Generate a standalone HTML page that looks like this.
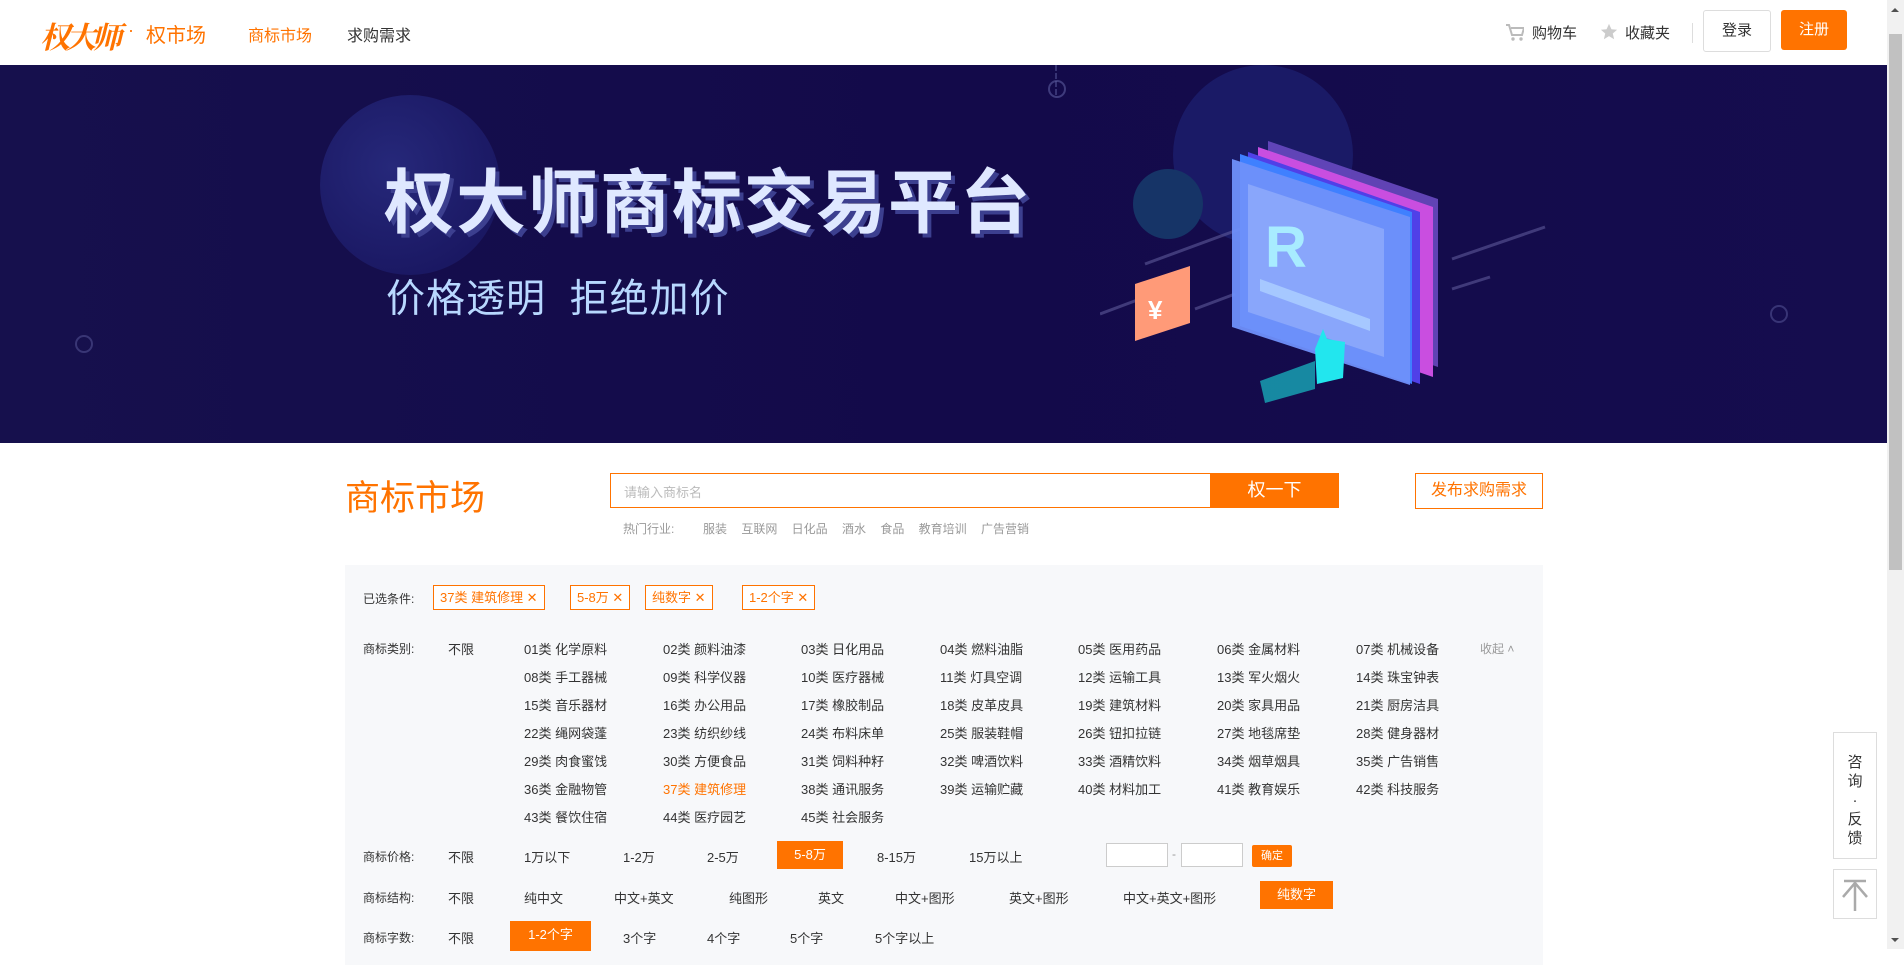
<!DOCTYPE html>
<html><head><meta charset="utf-8"><style>
*{margin:0;padding:0;box-sizing:border-box}
body{width:1904px;height:949px;overflow:hidden;font-family:"Liberation Sans","Noto Sans CJK SC",sans-serif;background:#fff;position:relative;color:#333}
.a{position:absolute;white-space:nowrap}
.o{color:#ff7300}
.hdr{position:absolute;left:0;top:0;width:1887px;height:65px;background:#fff}
.banner{position:absolute;left:0;top:65px;width:1887px;height:378px;background:linear-gradient(90deg,#16104d,#130a4a 50%,#150d4e);overflow:hidden}
.panel{position:absolute;left:345px;top:565px;width:1198px;height:400px;background:#f7f8fa}
.r{font-size:13px;color:#333}
.lb{font-size:12px;color:#333}
.tag{position:absolute;top:585px;height:25px;border:1px solid #ff7300;color:#ff7300;font-size:13px;line-height:23px;padding:0 6px;background:#fff}
.sel{position:absolute;background:#ff7300;color:#fff;font-size:13px;text-align:center}
</style></head><body>
<div class="hdr">
<div class="a" style="left:40px;top:13px;font-size:30px;font-style:italic;font-weight:bold;color:#ff7300;font-family:'Noto Serif CJK SC',serif;letter-spacing:-4px">权大师</div>
<div class="a o" style="left:128px;top:20px;font-size:18px">·</div>
<div class="a o" style="left:146px;top:19px;font-size:20px">权市场</div>
<div class="a o" style="left:248px;top:22px;font-size:16px">商标市场</div>
<div class="a" style="left:347px;top:22px;font-size:16px">求购需求</div>
<svg class="a" style="left:1506px;top:24px" width="18" height="17" viewBox="0 0 18 17"><path d="M0 1h3l3 10h10l2-7H5" fill="none" stroke="#bbb" stroke-width="2"/><circle cx="7" cy="15" r="1.7" fill="#bbb"/><circle cx="15" cy="15" r="1.7" fill="#bbb"/></svg>
<div class="a" style="left:1532px;top:22px;font-size:15px">购物车</div>
<svg class="a" style="left:1600px;top:23px" width="18" height="18" viewBox="0 0 20 20"><path d="M10 1l2.7 6 6.3.5-4.8 4.2 1.5 6.3L10 14.6 4.3 18l1.5-6.3L1 7.5 7.3 7z" fill="#ccc"/></svg>
<div class="a" style="left:1625px;top:22px;font-size:15px">收藏夹</div>
<div class="a" style="left:1692px;top:23px;width:1px;height:20px;background:#ddd"></div>
<div class="a" style="left:1703px;top:10px;width:68px;height:42px;border:1px solid #ddd;border-radius:3px;font-size:15px;line-height:40px;text-align:center">登录</div>
<div class="a" style="left:1781px;top:10px;width:66px;height:40px;background:#ff7300;border-radius:3px;color:#fff;font-size:15px;line-height:40px;text-align:center">注册</div>
</div>
<div class="banner">
<div class="a" style="left:320px;top:30px;width:180px;height:180px;border-radius:50%;background:radial-gradient(circle at 40% 40%,#26287a,#16125a)"></div>
<div class="a" style="left:1173px;top:0px;width:180px;height:180px;border-radius:50%;background:#1a1a66"></div>
<div class="a" style="left:1133px;top:104px;width:70px;height:70px;border-radius:50%;background:#163467"></div>
<div class="a" style="left:384px;top:82px;font-size:70px;font-weight:bold;color:#dfe8ff;letter-spacing:2px;text-shadow:4px 4px 0 #3c3f8f">权大师商标交易平台</div>
<div class="a" style="left:386px;top:203px;font-size:39px;color:#b8d8ff;letter-spacing:1px">价格透明&nbsp;&nbsp;拒绝加价</div>
<svg class="a" style="left:1100px;top:0" width="500" height="378" viewBox="0 0 500 330">
<line x1="45" y1="175" x2="140" y2="140" stroke="#5e5a9a" stroke-width="3" opacity=".6"/>
<line x1="0" y1="225" x2="40" y2="210" stroke="#5e5a9a" stroke-width="3" opacity=".6"/>
<line x1="95" y1="220" x2="135" y2="205" stroke="#5e5a9a" stroke-width="3" opacity=".6"/>
<line x1="352" y1="170" x2="445" y2="138" stroke="#5e5a9a" stroke-width="3" opacity=".6"/>
<line x1="352" y1="200" x2="390" y2="188" stroke="#5e5a9a" stroke-width="3" opacity=".6"/>
<path d="M168 52l170 58v168l-170-58z" fill="#6849c0" opacity=".9"/>
<path d="M158 58l175 60v170l-175-60z" fill="#c94ee0"/>
<path d="M148 63l172 60v172l-172-60z" fill="#5040e8"/>
<path d="M140 65l172 58v172l-172-58z" fill="#3f80ff"/>
<path d="M132 70l178 58v168l-178-58z" fill="#6f90fa" opacity=".95"/>
<path d="M148 95l136 45v128l-136-45z" fill="#89a6fb"/>
<text x="165" y="178" font-family="Liberation Sans" font-weight="bold" font-size="58" fill="#a8ecff">R</text>
<path d="M160 190l110 40v12l-110-40z" fill="#a6c8ff"/>
<path d="M215 260l8-20 4 10 18 3-2 36-26 6z" fill="#22e6ee"/>
<path d="M160 292l55-20v28l-50 14z" fill="#18a9b8" opacity=".8"/>
<path d="M35 195l55-18v57l-55 18z" fill="#ff9a78"/>
<text x="48" y="230" font-family="Liberation Sans" font-weight="bold" font-size="26" fill="#fff">¥</text>
</svg>
<div class="a" style="left:1055px;top:0;width:2px;height:30px;border-left:2px dashed #5b5c9e;opacity:.5"></div>
<div class="a" style="left:1048px;top:0;width:18px;height:18px;border:2px solid #5b5c9e;border-radius:50%;top:15px;opacity:.6"></div>
<div class="a" style="left:1770px;top:240px;width:18px;height:18px;border:2px solid #5b5c9e;border-radius:50%;opacity:.5"></div>
<div class="a" style="left:75px;top:270px;width:18px;height:18px;border:2px solid #5b5c9e;border-radius:50%;opacity:.5"></div>
</div>
<div class="a o" style="left:345px;top:470px;font-size:35px">商标市场</div>
<div class="a" style="left:610px;top:473px;width:600px;height:35px;border:1px solid #ff7300;border-right:0;background:#fff"></div>
<div class="a" style="left:624px;top:482px;font-size:13px;color:#bbb">请输入商标名</div>
<div class="a" style="left:1210px;top:473px;width:129px;height:35px;background:#ff7300;color:#fff;font-size:18px;line-height:35px;text-align:center">权一下</div>
<div class="a o" style="left:1415px;top:473px;width:128px;height:36px;border:1px solid #ff7300;font-size:16px;line-height:34px;text-align:center">发布求购需求</div>
<div class="a" style="left:623px;top:520px;font-size:12px;color:#999;word-spacing:11px">热门行业:&nbsp; 服装 互联网 日化品 酒水 食品 教育培训 广告营销</div>
<div class="panel"></div>
<div class="a lb" style="left:363px;top:590px">已选条件:</div>
<div class="tag" style="left:433px">37类 建筑修理 ✕</div>
<div class="tag" style="left:570px">5-8万 ✕</div>
<div class="tag" style="left:645px">纯数字 ✕</div>
<div class="tag" style="left:742px">1-2个字 ✕</div>
<div class="a lb" style="left:363px;top:640px">商标类别:</div>
<div class="a r" style="left:448px;top:639px">不限</div>
<div class="a" style="left:1480px;top:640px;font-size:12px;color:#999">收起 ˄</div>
<div id="cls"></div>
<div class="a lb" style="left:363px;top:848px">商标价格:</div>
<div class="a r" style="left:448px;top:847px">不限</div>
<div class="a r" style="left:524px;top:847px">1万以下</div>
<div class="a r" style="left:623px;top:847px">1-2万</div>
<div class="a r" style="left:707px;top:847px">2-5万</div>
<div class="sel" style="left:777px;top:841px;width:66px;height:28px;line-height:28px">5-8万</div>
<div class="a r" style="left:877px;top:847px">8-15万</div>
<div class="a r" style="left:969px;top:847px">15万以上</div>
<div class="a" style="left:1106px;top:843px;width:62px;height:24px;border:1px solid #ccc;background:#fff"></div>
<div class="a" style="left:1172px;top:847px;font-size:12px;color:#999">-</div>
<div class="a" style="left:1181px;top:843px;width:62px;height:24px;border:1px solid #ccc;background:#fff"></div>
<div class="sel" style="left:1252px;top:845px;width:40px;height:22px;line-height:22px;font-size:11px;border-radius:2px">确定</div>
<div class="a lb" style="left:363px;top:889px">商标结构:</div>
<div class="a r" style="left:448px;top:888px">不限</div>
<div class="a r" style="left:524px;top:888px">纯中文</div>
<div class="a r" style="left:614px;top:888px">中文+英文</div>
<div class="a r" style="left:729px;top:888px">纯图形</div>
<div class="a r" style="left:818px;top:888px">英文</div>
<div class="a r" style="left:895px;top:888px">中文+图形</div>
<div class="a r" style="left:1009px;top:888px">英文+图形</div>
<div class="a r" style="left:1123px;top:888px">中文+英文+图形</div>
<div class="sel" style="left:1260px;top:881px;width:73px;height:28px;line-height:28px">纯数字</div>
<div class="a lb" style="left:363px;top:929px">商标字数:</div>
<div class="a r" style="left:448px;top:928px">不限</div>
<div class="sel" style="left:510px;top:921px;width:81px;height:30px;line-height:28px">1-2个字</div>
<div class="a r" style="left:623px;top:928px">3个字</div>
<div class="a r" style="left:707px;top:928px">4个字</div>
<div class="a r" style="left:790px;top:928px">5个字</div>
<div class="a r" style="left:875px;top:928px">5个字以上</div>
<div class="a" style="left:1833px;top:732px;width:44px;height:127px;border:1px solid #ddd;background:#fff;font-size:15px;line-height:19px;text-align:center;padding-top:20px;white-space:normal">咨<br>询<br>·<br>反<br>馈</div>
<div class="a" style="left:1833px;top:869px;width:44px;height:50px;border:1px solid #ddd;background:#fff"><svg width="42" height="48" viewBox="0 0 42 48"><path d="M10 11h22M21 11v30M21 13L9 27M21 13l12 14" stroke="#aaa" stroke-width="2.5" fill="none"/></svg></div>
<div class="a" style="left:1887px;top:0;width:17px;height:949px;background:#f1f1f1"></div>
<div class="a" style="left:1889px;top:34px;width:13px;height:536px;background:#c1c1c1"></div>
<div class="a" style="left:1891px;top:8px;width:0;height:0;border:4px solid transparent;border-bottom-color:#505050;border-top:0"></div>
<div class="a" style="left:1891px;top:938px;width:0;height:0;border:4px solid transparent;border-top-color:#505050;border-bottom:0"></div>
<script>
var n=["化学原料","颜料油漆","日化用品","燃料油脂","医用药品","金属材料","机械设备","手工器械","科学仪器","医疗器械","灯具空调","运输工具","军火烟火","珠宝钟表","音乐器材","办公用品","橡胶制品","皮革皮具","建筑材料","家具用品","厨房洁具","绳网袋蓬","纺织纱线","布料床单","服装鞋帽","钮扣拉链","地毯席垫","健身器材","肉食蜜饯","方便食品","饲料种籽","啤酒饮料","酒精饮料","烟草烟具","广告销售","金融物管","建筑修理","通讯服务","运输贮藏","材料加工","教育娱乐","科技服务","餐饮住宿","医疗园艺","社会服务"];
var xs=[524,663,801,940,1078,1217,1356],h="";
for(var i=0;i<45;i++){var c=(i<9?"0":"")+(i+1);h+='<div class="a r" style="left:'+xs[i%7]+'px;top:'+(639+Math.floor(i/7)*28)+'px;'+(i==36?'color:#ff7300':'')+'">'+c+'类 '+n[i]+'</div>';}
document.getElementById("cls").innerHTML=h;
</script>
</body></html>
